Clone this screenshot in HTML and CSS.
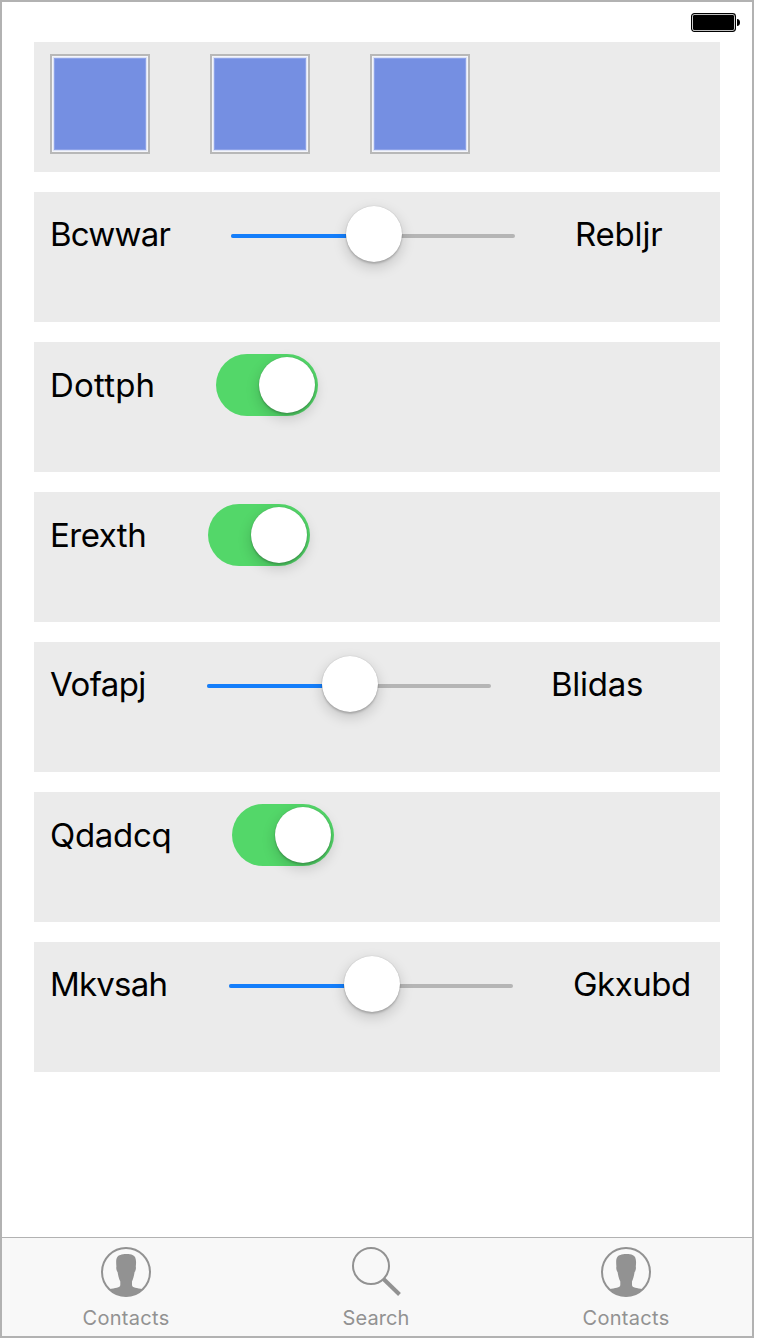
FILE: index.html
```html
<!DOCTYPE html>
<html lang="en">
<head>
<meta charset="utf-8">
<title>Controls</title>
<link rel="stylesheet" href="styles.css">
</head>
<body>
<div class="screen">
  <header class="status">
    <svg class="battery" width="50" height="20" viewBox="0 0 50 20">
      <rect x="0.6" y="0.6" width="43.8" height="17.8" rx="2.8" fill="#fff" stroke="#000" stroke-width="1.2"/>
      <rect x="2" y="2" width="41" height="15" rx="1.2"/>
      <path d="M46 6c2 0 3 1.5 3 3.500s-1 3.500-3 3.500z"/>
    </svg>
  </header>
  <main class="rows">
    <section class="row swatches">
      <div class="swatch"></div><div class="swatch"></div><div class="swatch"></div>
    </section>
    <section class="row">
      <span class="label w-bcwwar">Bcwwar</span>
      <div class="slider"><div class="fill"></div><div class="knob"></div></div>
      <span class="label w-rebljr">Rebljr</span>
    </section>
    <section class="row toggles">
      <span class="label w-dottph">Dottph</span>
      <div class="toggle"><div class="knob"></div></div>
    </section>
    <section class="row toggles">
      <span class="label w-erexth">Erexth</span>
      <div class="toggle"><div class="knob"></div></div>
    </section>
    <section class="row">
      <span class="label w-vofapj">Vofapj</span>
      <div class="slider"><div class="fill"></div><div class="knob"></div></div>
      <span class="label w-blidas">Blidas</span>
    </section>
    <section class="row toggles">
      <span class="label w-qdadcq">Qdadcq</span>
      <div class="toggle"><div class="knob"></div></div>
    </section>
    <section class="row">
      <span class="label w-mkvsah">Mkvsah</span>
      <div class="slider"><div class="fill"></div><div class="knob"></div></div>
      <span class="label w-gkxubd">Gkxubd</span>
    </section>
  </main>
  <nav class="tabs">
    <div class="tab">
      <svg width="50" height="50" viewBox="0 0 50 50">
        <circle cx="25" cy="25" r="24" fill="none" stroke="#929292" stroke-width="2"/>
        <path fill="#929292" d="M19.300 34.500C17.800 31.500 17 28 16.600 25C15.400 24 15 21 15.400 19.500C14.700 12 15.500 8.800 19.500 8C22 6.700 29 6.700 31.500 8C35 9.500 35.500 13 34.800 19.500C35.200 21 34.800 24 33.600 25C33 29 32.200 32 31 34.500V38C31 41.300 36 40.500 42 42.500A24.500 24.500 0 0 1 8 42.500C14 40.500 19.300 41.300 19.300 38Z"/>
      </svg>
      <span class="tab-label">Contacts</span>
    </div>
    <div class="tab">
      <svg width="50" height="50" viewBox="0 0 50 50">
        <circle cx="20" cy="19" r="18" fill="none" stroke="#929292" stroke-width="2"/>
        <path d="M32.500 32L48.500 47.500" stroke="#929292" stroke-width="4"/>
      </svg>
      <span class="tab-label search">Search</span>
    </div>
    <div class="tab">
      <svg width="50" height="50" viewBox="0 0 50 50">
        <circle cx="25" cy="25" r="24" fill="none" stroke="#929292" stroke-width="2"/>
        <path fill="#929292" d="M19.300 34.500C17.800 31.500 17 28 16.600 25C15.400 24 15 21 15.400 19.500C14.700 12 15.500 8.800 19.500 8C22 6.700 29 6.700 31.500 8C35 9.500 35.500 13 34.800 19.500C35.200 21 34.800 24 33.600 25C33 29 32.200 32 31 34.500V38C31 41.300 36 40.500 42 42.500A24.500 24.500 0 0 1 8 42.500C14 40.500 19.300 41.300 19.300 38Z"/>
      </svg>
      <span class="tab-label">Contacts</span>
    </div>
  </nav>
</div>
</body>
</html>
```
FILE: styles.css
```css
*, *::before { box-sizing: border-box; }
body { margin: 0; background: #fff; font-family: Inter, "Liberation Sans", sans-serif; }
.screen {
  width: 754px; height: 1338px;
  border: 2px solid #b2b2b2;
  display: flex; flex-direction: column;
}
.status { height: 40px; padding: 11px 11px 0 0; display: flex; justify-content: flex-end; }
.rows { flex: 1; padding: 0 32px; display: flex; flex-direction: column; gap: 20px; }
.row {
  height: 130px; background: #ebebeb;
  padding: 12px 16px;
  display: flex; align-items: flex-start; gap: 60px;
}
.swatch {
  width: 100px; height: 100px;
  border: 2px solid #b8b8b8;
  background: #f4f5fa; padding: 1px;
}
.swatch::before {
  content: ""; display: block; width: 94px; height: 94px;
  background: #758fe2;
  background-clip: padding-box;
  border: 1px solid #dce2f6;
  box-shadow: inset 0 0 0 1px #8da2e8;
}
.label {
  flex: none;
  font-size: 33px; line-height: 40px; padding-top: 10px;
  white-space: nowrap; letter-spacing: -0.5px; color: #000;
}
.toggles .label { padding-top: 11px; }
.w-bcwwar { width: 121px; letter-spacing: -0.8px; }
.w-rebljr { width: 88px; letter-spacing: -0.2px; }
.w-dottph { width: 106px; letter-spacing: 0.2px; }
.w-erexth { width: 98px; }
.w-vofapj { width: 97px; letter-spacing: -0.6px; }
.w-blidas { width: 92px; letter-spacing: -0.25px; }
.w-qdadcq { width: 122px; letter-spacing: -0.3px; }
.w-mkvsah { width: 119px; letter-spacing: -0.8px; }
.w-gkxubd { width: 118px; }
.slider {
  flex: none; width: 284px; height: 4px; margin-top: 30px;
  border-radius: 2px; background: #b5b5b5;
  display: flex; align-items: center;
}
.fill { width: 115px; height: 4px; border-radius: 2px 0 0 2px; background: #147efb; }
.knob {
  flex: none; width: 56px; height: 56px; border-radius: 50%; background: #fff;
  box-shadow: 0 0 1px rgba(0,0,0,.25), 0 2px 2px rgba(0,0,0,.16), 0 5px 14px rgba(0,0,0,.18);
}
.slider .knob { margin-top: -4px; }
.toggle {
  flex: none; width: 102px; height: 62px; border-radius: 31px; background: #53d769;
  display: flex; justify-content: flex-end; padding: 3px;
}
.tabs {
  height: 99px; border-top: 1px solid #b2b2b2; background: #f8f8f8;
  display: flex; justify-content: center; padding-right: 2px;
}
.tab { flex: none; width: 250px; padding-top: 9px; display: flex; flex-direction: column; align-items: center; }
.tab svg { display: block; }
.tab-label { margin-top: 9px; font-size: 20px; line-height: 24px; letter-spacing: 0.3px; color: #929292; }
.search { letter-spacing: 0.1px; }
```
